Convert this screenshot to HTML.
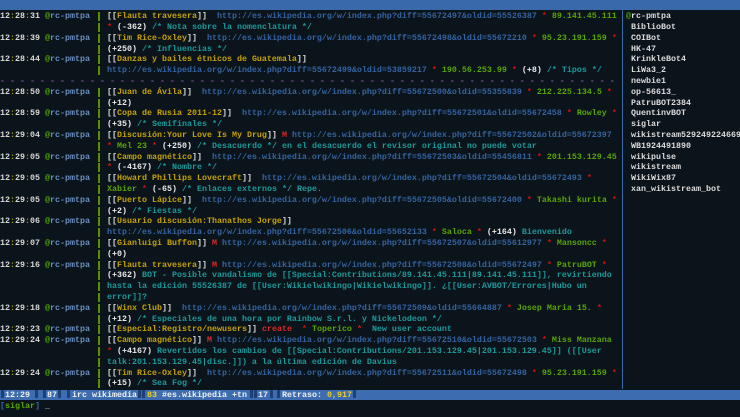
<!DOCTYPE html>
<html><head><meta charset="utf-8"><style>
*{margin:0;padding:0;box-sizing:border-box}
body{width:740px;height:417px;background:#0b141b;overflow:hidden;position:relative;font-family:"Liberation Mono","DejaVu Sans Mono",monospace;font-size:8.33px;color:#d0d0d0}
#top{position:absolute;left:0;top:0;width:740px;height:10px;background:#3a69aa}
#vsep{position:absolute;left:622px;top:10px;width:1px;height:379px;background:#3a69aa}
#chat{position:absolute;left:0;top:11.3px;width:622px}
.r{position:relative;height:10.8px;line-height:10.8px;white-space:pre}
.r span{white-space:pre}
.t{position:absolute;left:0;font-weight:bold;color:#d8d8d8}
.t i{font-style:normal;color:#b0a000}
.n{position:absolute;left:45px;color:#6a8fc0;font-weight:bold}
.n i{font-style:normal;color:#4fb000}
.b{position:absolute;left:98px;top:1px;width:2px;height:9px;background:#5a8f00}
.m{position:absolute;left:107px;width:513px;overflow:hidden;display:block}
.w{color:#d8d8d8;font-weight:bold}.y{color:#c6a200;font-weight:bold}.u{color:#3563a0;font-weight:bold}.s{color:#d41010;font-weight:bold}.g{color:#5aa400;font-weight:bold}.p{color:#eaeaea;font-weight:bold}.c{color:#1a9a9a;font-weight:bold}.M{color:#e02828;font-weight:bold}
.sep{position:absolute;left:0;width:620px;color:#8a4fb0;font-weight:bold;overflow:hidden}
#nl{position:absolute;left:626px;top:11.3px;width:114px;overflow:hidden;color:#dcdcdc;font-weight:bold}
#nl div{height:10.8px;line-height:10.8px;white-space:pre}
#status{position:absolute;left:0;top:389.5px;width:740px;height:10.5px;background:#3d6db0;line-height:10.5px;white-space:pre;color:#f0f0f0;font-weight:bold}
#status span{position:absolute;top:0}
.d{position:absolute;top:1px;width:3px;height:8.5px;background:#1d3f78}
#input{position:absolute;left:0;top:401px;height:11px;line-height:11px;white-space:pre;font-weight:bold}
</style></head><body>
<div id="top"></div>
<div id="vsep"></div>
<div id="chat">
<div class="r"><span class="t">12<i>:</i>28<i>:</i>31</span><span class="n"><i>@</i>rc-pmtpa</span><span class="b"></span><span class="m"><span class="w">[[</span><span class="y">Flauta travesera</span><span class="w">]]</span>  <span class="u">http://es.wikipedia.org/w/index.php?diff=55672497&amp;oldid=55526387</span> <span class="s">*</span> <span class="g">89.141.45.111</span></span></div>
<div class="r"><span class="b"></span><span class="m"><span class="s">*</span> <span class="p">(-362)</span> <span class="c">/* Nota sobre la nomenclatura */</span></span></div>
<div class="r"><span class="t">12<i>:</i>28<i>:</i>39</span><span class="n"><i>@</i>rc-pmtpa</span><span class="b"></span><span class="m"><span class="w">[[</span><span class="y">Tim Rice-Oxley</span><span class="w">]]</span>  <span class="u">http://es.wikipedia.org/w/index.php?diff=55672498&amp;oldid=55672210</span> <span class="s">*</span> <span class="g">95.23.191.159</span> <span class="s">*</span></span></div>
<div class="r"><span class="b"></span><span class="m"><span class="p">(+250)</span> <span class="c">/* Influencias */</span></span></div>
<div class="r"><span class="t">12<i>:</i>28<i>:</i>44</span><span class="n"><i>@</i>rc-pmtpa</span><span class="b"></span><span class="m"><span class="w">[[</span><span class="y">Danzas y bailes étnicos de Guatemala</span><span class="w">]]</span></span></div>
<div class="r"><span class="b"></span><span class="m"><span class="u">http://es.wikipedia.org/w/index.php?diff=55672499&amp;oldid=53859217</span> <span class="s">*</span> <span class="g">190.56.253.99</span> <span class="s">*</span> <span class="p">(+8)</span> <span class="c">/* Tipos */</span></span></div>
<div class="r"><span class="sep">- - - - - - - - - - - - - - - - - - - - - - - - - - - - - - - - - - - - - - - - - - - - - - - - - - - - - - - - - - - - - - - - - - - - - - - - - - - -</span></div>
<div class="r"><span class="t">12<i>:</i>28<i>:</i>50</span><span class="n"><i>@</i>rc-pmtpa</span><span class="b"></span><span class="m"><span class="w">[[</span><span class="y">Juan de Ávila</span><span class="w">]]</span>  <span class="u">http://es.wikipedia.org/w/index.php?diff=55672500&amp;oldid=55355839</span> <span class="s">*</span> <span class="g">212.225.134.5</span> <span class="s">*</span></span></div>
<div class="r"><span class="b"></span><span class="m"><span class="p">(+12)</span></span></div>
<div class="r"><span class="t">12<i>:</i>28<i>:</i>59</span><span class="n"><i>@</i>rc-pmtpa</span><span class="b"></span><span class="m"><span class="w">[[</span><span class="y">Copa de Rusia 2011-12</span><span class="w">]]</span>  <span class="u">http://es.wikipedia.org/w/index.php?diff=55672501&amp;oldid=55672458</span> <span class="s">*</span> <span class="g">Rowley</span> <span class="s">*</span></span></div>
<div class="r"><span class="b"></span><span class="m"><span class="p">(+35)</span> <span class="c">/* Semifinales */</span></span></div>
<div class="r"><span class="t">12<i>:</i>29<i>:</i>04</span><span class="n"><i>@</i>rc-pmtpa</span><span class="b"></span><span class="m"><span class="w">[[</span><span class="y">Discusión:Your Love Is My Drug</span><span class="w">]]</span> <span class="M">M</span> <span class="u">http://es.wikipedia.org/w/index.php?diff=55672502&amp;oldid=55672397</span></span></div>
<div class="r"><span class="b"></span><span class="m"><span class="s">*</span> <span class="g">Mel 23</span> <span class="s">*</span> <span class="p">(+250)</span> <span class="c">/* Desacuerdo */ en el desacuerdo el revisor original no puede votar</span></span></div>
<div class="r"><span class="t">12<i>:</i>29<i>:</i>05</span><span class="n"><i>@</i>rc-pmtpa</span><span class="b"></span><span class="m"><span class="w">[[</span><span class="y">Campo magnético</span><span class="w">]]</span>  <span class="u">http://es.wikipedia.org/w/index.php?diff=55672503&amp;oldid=55456811</span> <span class="s">*</span> <span class="g">201.153.129.45</span></span></div>
<div class="r"><span class="b"></span><span class="m"><span class="s">*</span> <span class="p">(-4167)</span> <span class="c">/* Nombre */</span></span></div>
<div class="r"><span class="t">12<i>:</i>29<i>:</i>05</span><span class="n"><i>@</i>rc-pmtpa</span><span class="b"></span><span class="m"><span class="w">[[</span><span class="y">Howard Phillips Lovecraft</span><span class="w">]]</span>  <span class="u">http://es.wikipedia.org/w/index.php?diff=55672504&amp;oldid=55672493</span> <span class="s">*</span></span></div>
<div class="r"><span class="b"></span><span class="m"><span class="g">Xabier</span> <span class="s">*</span> <span class="p">(-65)</span> <span class="c">/* Enlaces externos */ Repe.</span></span></div>
<div class="r"><span class="t">12<i>:</i>29<i>:</i>05</span><span class="n"><i>@</i>rc-pmtpa</span><span class="b"></span><span class="m"><span class="w">[[</span><span class="y">Puerto Lápice</span><span class="w">]]</span>  <span class="u">http://es.wikipedia.org/w/index.php?diff=55672505&amp;oldid=55672400</span> <span class="s">*</span> <span class="g">Takashi kurita</span> <span class="s">*</span></span></div>
<div class="r"><span class="b"></span><span class="m"><span class="p">(+2)</span> <span class="c">/* Fiestas */</span></span></div>
<div class="r"><span class="t">12<i>:</i>29<i>:</i>06</span><span class="n"><i>@</i>rc-pmtpa</span><span class="b"></span><span class="m"><span class="w">[[</span><span class="y">Usuario discusión:Thanathos Jorge</span><span class="w">]]</span></span></div>
<div class="r"><span class="b"></span><span class="m"><span class="u">http://es.wikipedia.org/w/index.php?diff=55672506&amp;oldid=55652133</span> <span class="s">*</span> <span class="g">Saloca</span> <span class="s">*</span> <span class="p">(+164)</span> <span class="c">Bienvenido</span></span></div>
<div class="r"><span class="t">12<i>:</i>29<i>:</i>07</span><span class="n"><i>@</i>rc-pmtpa</span><span class="b"></span><span class="m"><span class="w">[[</span><span class="y">Gianluigi Buffon</span><span class="w">]]</span> <span class="M">M</span> <span class="u">http://es.wikipedia.org/w/index.php?diff=55672507&amp;oldid=55612977</span> <span class="s">*</span> <span class="g">Mansoncc</span> <span class="s">*</span></span></div>
<div class="r"><span class="b"></span><span class="m"><span class="p">(+0)</span></span></div>
<div class="r"><span class="t">12<i>:</i>29<i>:</i>16</span><span class="n"><i>@</i>rc-pmtpa</span><span class="b"></span><span class="m"><span class="w">[[</span><span class="y">Flauta travesera</span><span class="w">]]</span> <span class="M">M</span> <span class="u">http://es.wikipedia.org/w/index.php?diff=55672508&amp;oldid=55672497</span> <span class="s">*</span> <span class="g">PatruBOT</span> <span class="s">*</span></span></div>
<div class="r"><span class="b"></span><span class="m"><span class="p">(+362)</span> <span class="c">BOT - Posible vandalismo de [[Special:Contributions/89.141.45.111|89.141.45.111]], revirtiendo</span></span></div>
<div class="r"><span class="b"></span><span class="m"><span class="c">hasta la edición 55526387 de [[User:Wikielwikingo|Wikielwikingo]]. ¿[[User:AVBOT/Errores|Hubo un</span></span></div>
<div class="r"><span class="b"></span><span class="m"><span class="c">error]]?</span></span></div>
<div class="r"><span class="t">12<i>:</i>29<i>:</i>18</span><span class="n"><i>@</i>rc-pmtpa</span><span class="b"></span><span class="m"><span class="w">[[</span><span class="y">Winx Club</span><span class="w">]]</span>  <span class="u">http://es.wikipedia.org/w/index.php?diff=55672509&amp;oldid=55664887</span> <span class="s">*</span> <span class="g">Josep Maria 15.</span> <span class="s">*</span></span></div>
<div class="r"><span class="b"></span><span class="m"><span class="p">(+12)</span> <span class="c">/* Especiales de una hora por Rainbow S.r.l. y Nickelodeon */</span></span></div>
<div class="r"><span class="t">12<i>:</i>29<i>:</i>23</span><span class="n"><i>@</i>rc-pmtpa</span><span class="b"></span><span class="m"><span class="w">[[</span><span class="y">Especial:Registro/newusers</span><span class="w">]]</span> <span class="M">create</span>  <span class="s">*</span> <span class="g">Toperico</span> <span class="s">*</span>  <span class="c">New user account</span></span></div>
<div class="r"><span class="t">12<i>:</i>29<i>:</i>24</span><span class="n"><i>@</i>rc-pmtpa</span><span class="b"></span><span class="m"><span class="w">[[</span><span class="y">Campo magnético</span><span class="w">]]</span> <span class="M">M</span> <span class="u">http://es.wikipedia.org/w/index.php?diff=55672510&amp;oldid=55672503</span> <span class="s">*</span> <span class="g">Miss Manzana</span></span></div>
<div class="r"><span class="b"></span><span class="m"><span class="s">*</span> <span class="p">(+4167)</span> <span class="c">Revertidos los cambios de [[Special:Contributions/201.153.129.45|201.153.129.45]] ([[User</span></span></div>
<div class="r"><span class="b"></span><span class="m"><span class="c">talk:201.153.129.45|disc.]]) a la última edición de Davius</span></span></div>
<div class="r"><span class="t">12<i>:</i>29<i>:</i>24</span><span class="n"><i>@</i>rc-pmtpa</span><span class="b"></span><span class="m"><span class="w">[[</span><span class="y">Tim Rice-Oxley</span><span class="w">]]</span>  <span class="u">http://es.wikipedia.org/w/index.php?diff=55672511&amp;oldid=55672498</span> <span class="s">*</span> <span class="g">95.23.191.159</span> <span class="s">*</span></span></div>
<div class="r"><span class="b"></span><span class="m"><span class="p">(+15)</span> <span class="c">/* Sea Fog */</span></span></div>
</div>
<div id="nl">
<div><span style="color:#4fb000">@</span>rc-pmtpa</div>
<div> BiblioBot</div>
<div> COIBot</div>
<div> HK-47</div>
<div> KrinkleBot4</div>
<div> LiWa3_2</div>
<div> newbie1</div>
<div> op-56613_</div>
<div> PatruBOT2384</div>
<div> QuentinvBOT</div>
<div> siglar</div>
<div> wikistream529249224669</div>
<div> WB1924491890</div>
<div> wikipulse</div>
<div> wikistream</div>
<div> WikiWix87</div>
<div> xan_wikistream_bot</div>
</div>
<div id="status">
<span class="d" style="left:1px"></span><span style="left:5px">12:29</span><span class="d" style="left:35px"></span>
<span class="d" style="left:43px"></span><span style="left:47px">87</span><span class="d" style="left:58px"></span>
<span class="d" style="left:67px"></span><span style="left:72px">irc wikimedia</span><span class="d" style="left:138px"></span>
<span class="d" style="left:142px"></span><span style="left:147px;color:#f0d020">83</span><span style="left:162px">#es.wikipedia +tn</span><span class="d" style="left:250px"></span>
<span class="d" style="left:254px"></span><span style="left:258px">17</span><span class="d" style="left:270px"></span>
<span class="d" style="left:277px"></span><span style="left:282px">Retraso: <span style="color:#f0d020;position:static">0,917</span></span><span class="d" style="left:353px"></span>
</div>
<div id="input"><span style="color:#3a69aa">[</span><span style="color:#5aa400">siglar</span><span style="color:#3a69aa">]</span> <span style="color:#bbb">_</span></div>
</body></html>
